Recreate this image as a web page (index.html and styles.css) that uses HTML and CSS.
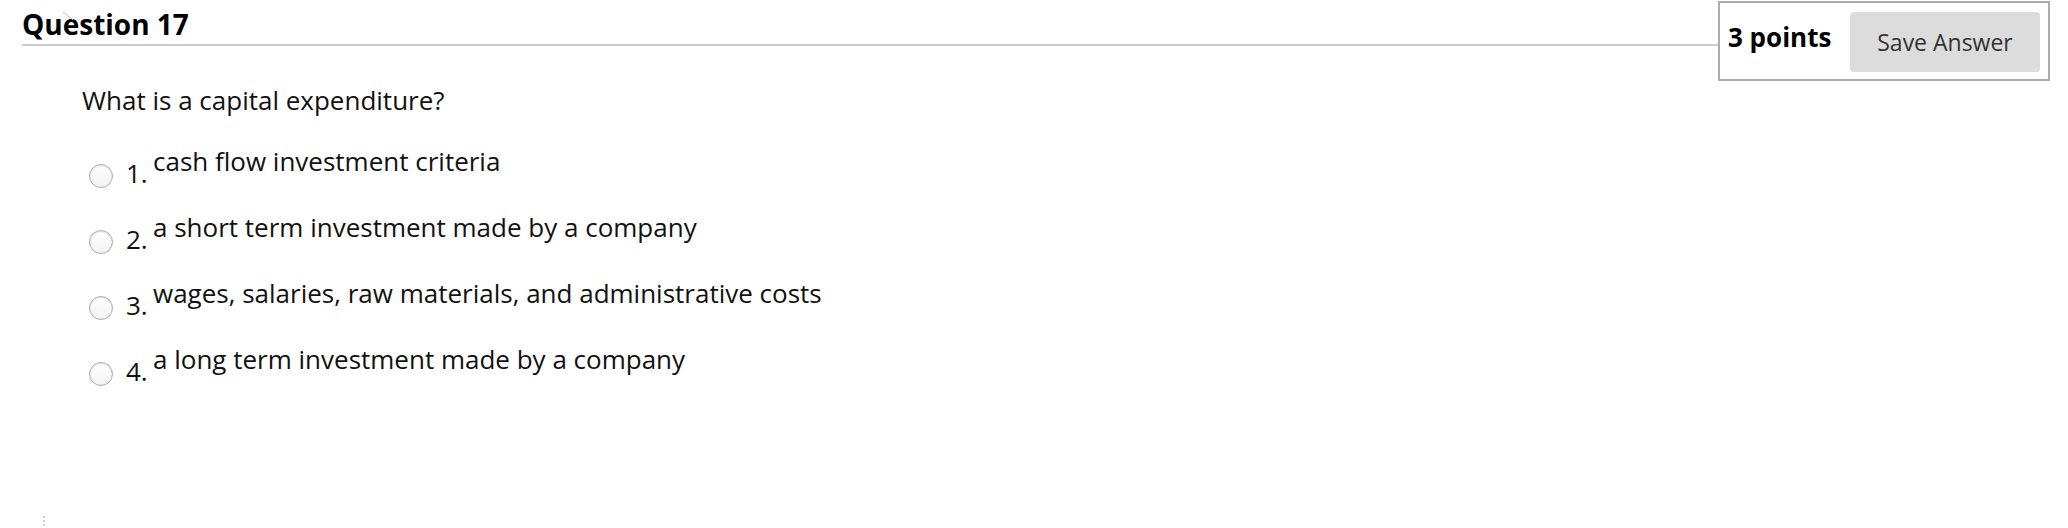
FILE: index.html
```html
<!DOCTYPE html>
<html>
<head>
<meta charset="utf-8">
<title>Question 17</title>
<link rel="stylesheet" href="styles.css">
</head>
<body>
<div class="page">
  <div class="header">
    <h2 class="title">Question 17</h2>
    <div class="points-box">
      <span class="points">3 points</span>
      <button class="save">Save Answer</button>
    </div>
  </div>
  <div class="question">What is a capital expenditure?</div>
  <div class="options">
    <label class="option"><span class="radio"></span><span class="num">1.</span><span class="text">cash flow investment criteria</span></label>
    <label class="option"><span class="radio"></span><span class="num">2.</span><span class="text">a short term investment made by a company</span></label>
    <label class="option"><span class="radio"></span><span class="num">3.</span><span class="text">wages, salaries, raw materials, and administrative costs</span></label>
    <label class="option"><span class="radio"></span><span class="num">4.</span><span class="text">a long term investment made by a company</span></label>
  </div>
  <svg class="artifact" width="12" height="10" viewBox="0 0 12 10"><line x1="1" y1="1" x2="11" y2="9" stroke="#bbb" stroke-width="1"/></svg>
  <span class="dots"></span>
</div>
</body>
</html>
```
FILE: styles.css
```css
html, body {
  margin: 0;
  padding: 0;
  background: #fff;
}
body {
  font-family: "Open Sans", "Liberation Sans", sans-serif;
  color: #111;
  width: 2068px;
  height: 528px;
  overflow: hidden;
}
.page {
  position: relative;
  padding: 0 18px 0 22px;
}
.header {
  display: flex;
  align-items: flex-start;
}
.title {
  flex: 1;
  margin: 0;
  padding: 6px 0 2px;
  font-size: 28px;
  line-height: 36px;
  font-weight: 700;
  color: #000;
  border-bottom: 2px solid #cbcbcb;
}
.points-box {
  margin-top: 1px;
  border: 2px solid #ababab;
  padding: 9px 8px 7px 8px;
  display: flex;
  align-items: flex-start;
  gap: 20px;
}
.points {
  margin-top: 8px;
  font-size: 26px;
  line-height: 34px;
  font-weight: 700;
  color: #000;
  width: 102px;
  white-space: nowrap;
}
.save {
  width: 190px;
  height: 60px;
  border: none;
  border-radius: 4px;
  background: #dcdcdc;
  color: #333;
  font-family: "Open Sans", "Liberation Sans", sans-serif;
  font-size: 23px;
  padding: 0;
}
.question {
  margin-top: 2px;
  padding-left: 60px;
  font-size: 26px;
  line-height: 34px;
  color: #111;
}
.options {
  margin-top: 27px;
  padding-left: 67px;
  display: flex;
  flex-direction: column;
  gap: 20px;
}
.option {
  display: flex;
  align-items: flex-start;
  font-size: 26px;
  line-height: 34px;
  color: #111;
}
.radio {
  width: 24px;
  height: 24px;
  box-sizing: border-box;
  margin-top: 20px;
  border: 1px solid #adadad;
  border-radius: 50%;
  background: linear-gradient(#ffffff, #f3f3f3);
  box-shadow: inset 0 1px 2px rgba(0,0,0,0.12);
  flex: none;
}
.num {
  margin-left: 13px;
  margin-top: 12px;
  width: 27px;
}
.text {
  white-space: nowrap;
}
.artifact {
  position: absolute;
  left: 62px;
  top: 11px;
}
.dots {
  position: absolute;
  left: 43px;
  top: 516px;
  width: 2px;
  height: 11px;
  background: repeating-linear-gradient(#cfcfcf 0 2px, transparent 2px 4px);
}
```
